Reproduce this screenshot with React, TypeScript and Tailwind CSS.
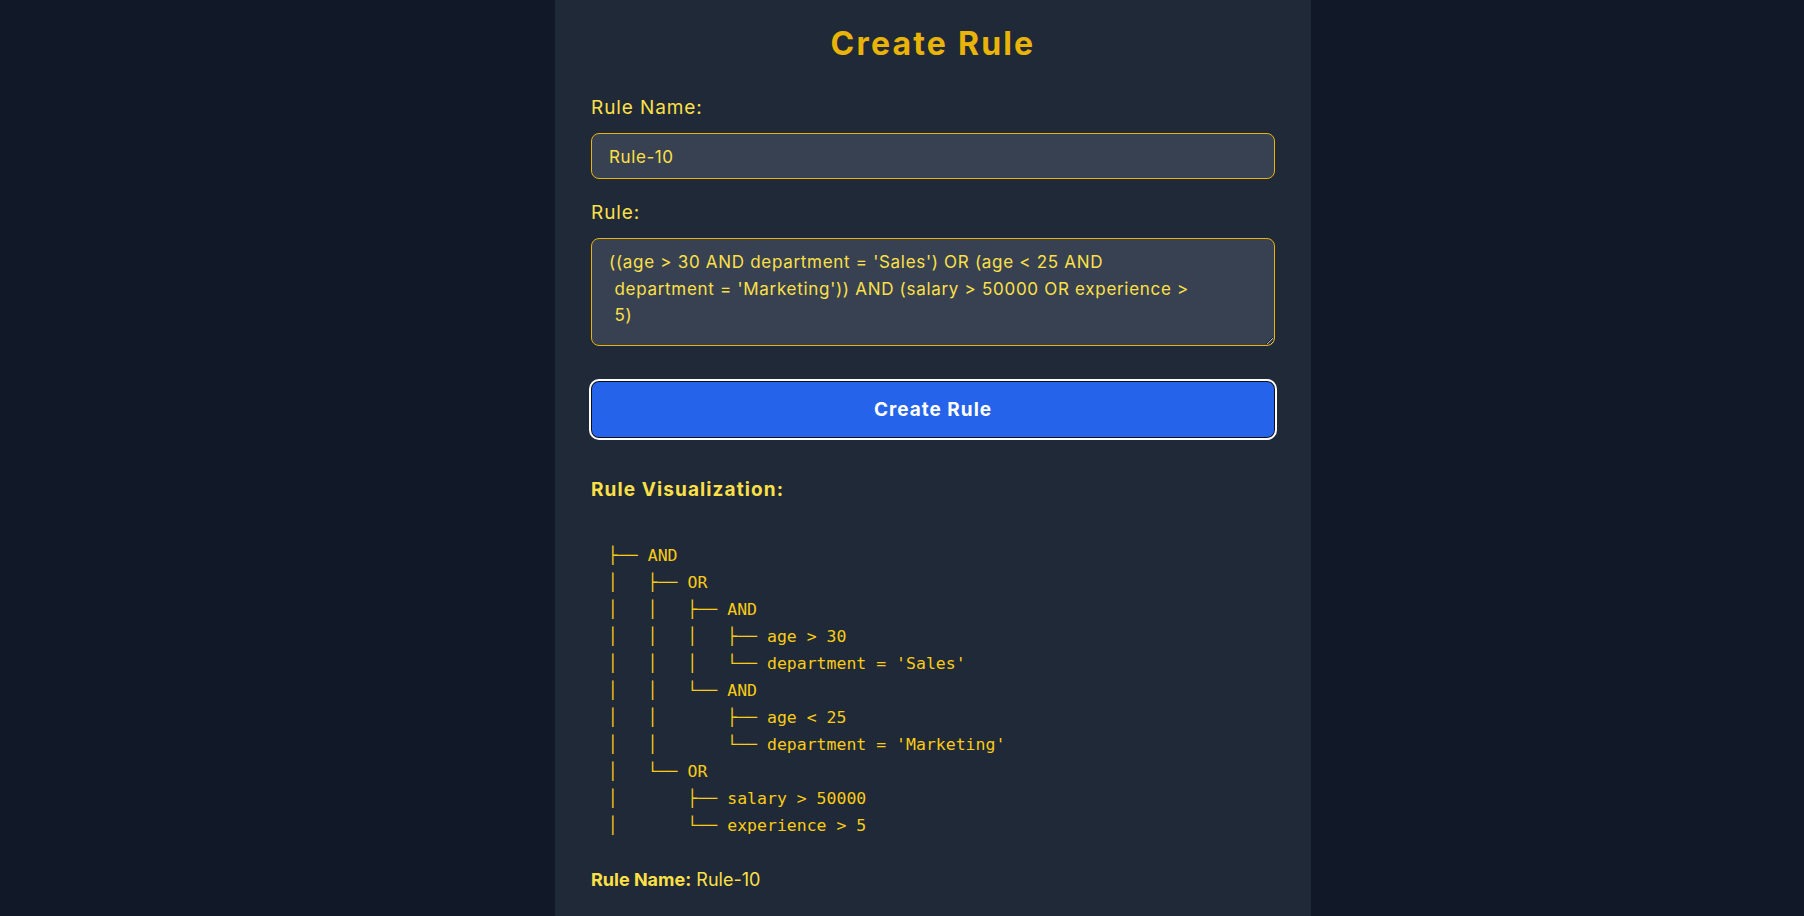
import React from "react";

const tree = [
  "├── AND",
  "│   ├── OR",
  "│   │   ├── AND",
  "│   │   │   ├── age > 30",
  "│   │   │   └── department = 'Sales'",
  "│   │   └── AND",
  "│   │       ├── age < 25",
  "│   │       └── department = 'Marketing'",
  "│   └── OR",
  "│       ├── salary > 50000",
  "│       └── experience > 5",
];

const ruleText =
  "((age > 30 AND department = 'Sales') OR (age < 25 AND\n department = 'Marketing')) AND (salary > 50000 OR experience >\n 5)";

export default function App() {
  return (
    <div
      className="h-[916px] w-full overflow-hidden bg-[#111827]"
      style={{ fontFamily: "Inter, 'Noto Sans', sans-serif" }}
    >
      <div className="ml-[555px] h-full w-[756px] bg-[#1f2937] px-[36px] pt-[26px]">
        <h1 className="text-center text-[32px] font-bold leading-[36px] tracking-[2.2px] text-[#eab308]">
          Create Rule
        </h1>

        <label className="mt-[32px] block text-[19px] leading-[28px] tracking-[0.9px] text-[#fde047]">
          Rule Name:
        </label>
        <input
          readOnly
          value="Rule-10"
          className="mt-[11px] block h-[46px] w-full rounded-lg border border-[#eab308] bg-[#374151] px-[17px] pt-[1px] text-[17px] tracking-[0.6px] text-[#fde047] outline-none"
        />

        <label className="mt-[20px] block text-[19px] leading-[28px] tracking-[0.9px] text-[#fde047]">
          Rule:
        </label>
        <textarea
          readOnly
          value={ruleText}
          className="mt-[11px] block h-[108px] w-full resize-y rounded-lg border border-[#eab308] bg-[#374151] px-[17px] pt-[10px] pb-[8px] text-[17px] leading-[26.5px] tracking-[0.7px] text-[#fde047] outline-none"
        />

        <button className="mt-[35px] block h-[57px] w-full rounded-lg border border-[#0b0f17] bg-[#2563eb] pt-[2px] text-[19px] font-bold tracking-[1px] text-white outline-2 outline-white">
          Create Rule
        </button>

        <h3 className="mt-[38px] text-[19px] font-bold leading-[28px] tracking-[1.1px] text-[#fde047]">
          Rule Visualization:
        </h3>
        <pre
          className="mt-[38px] pl-[17px] text-[16.5px] leading-[27px] text-[#facc15]"
          style={{ fontFamily: "'DejaVu Sans Mono', monospace" }}
        >
          {tree.join("\n")}
        </pre>

        <p className="mt-[27px] text-[18px] leading-[28px] text-[#fde047]">
          <span className="font-bold">Rule Name:</span> Rule-10
        </p>
      </div>
    </div>
  );
}
